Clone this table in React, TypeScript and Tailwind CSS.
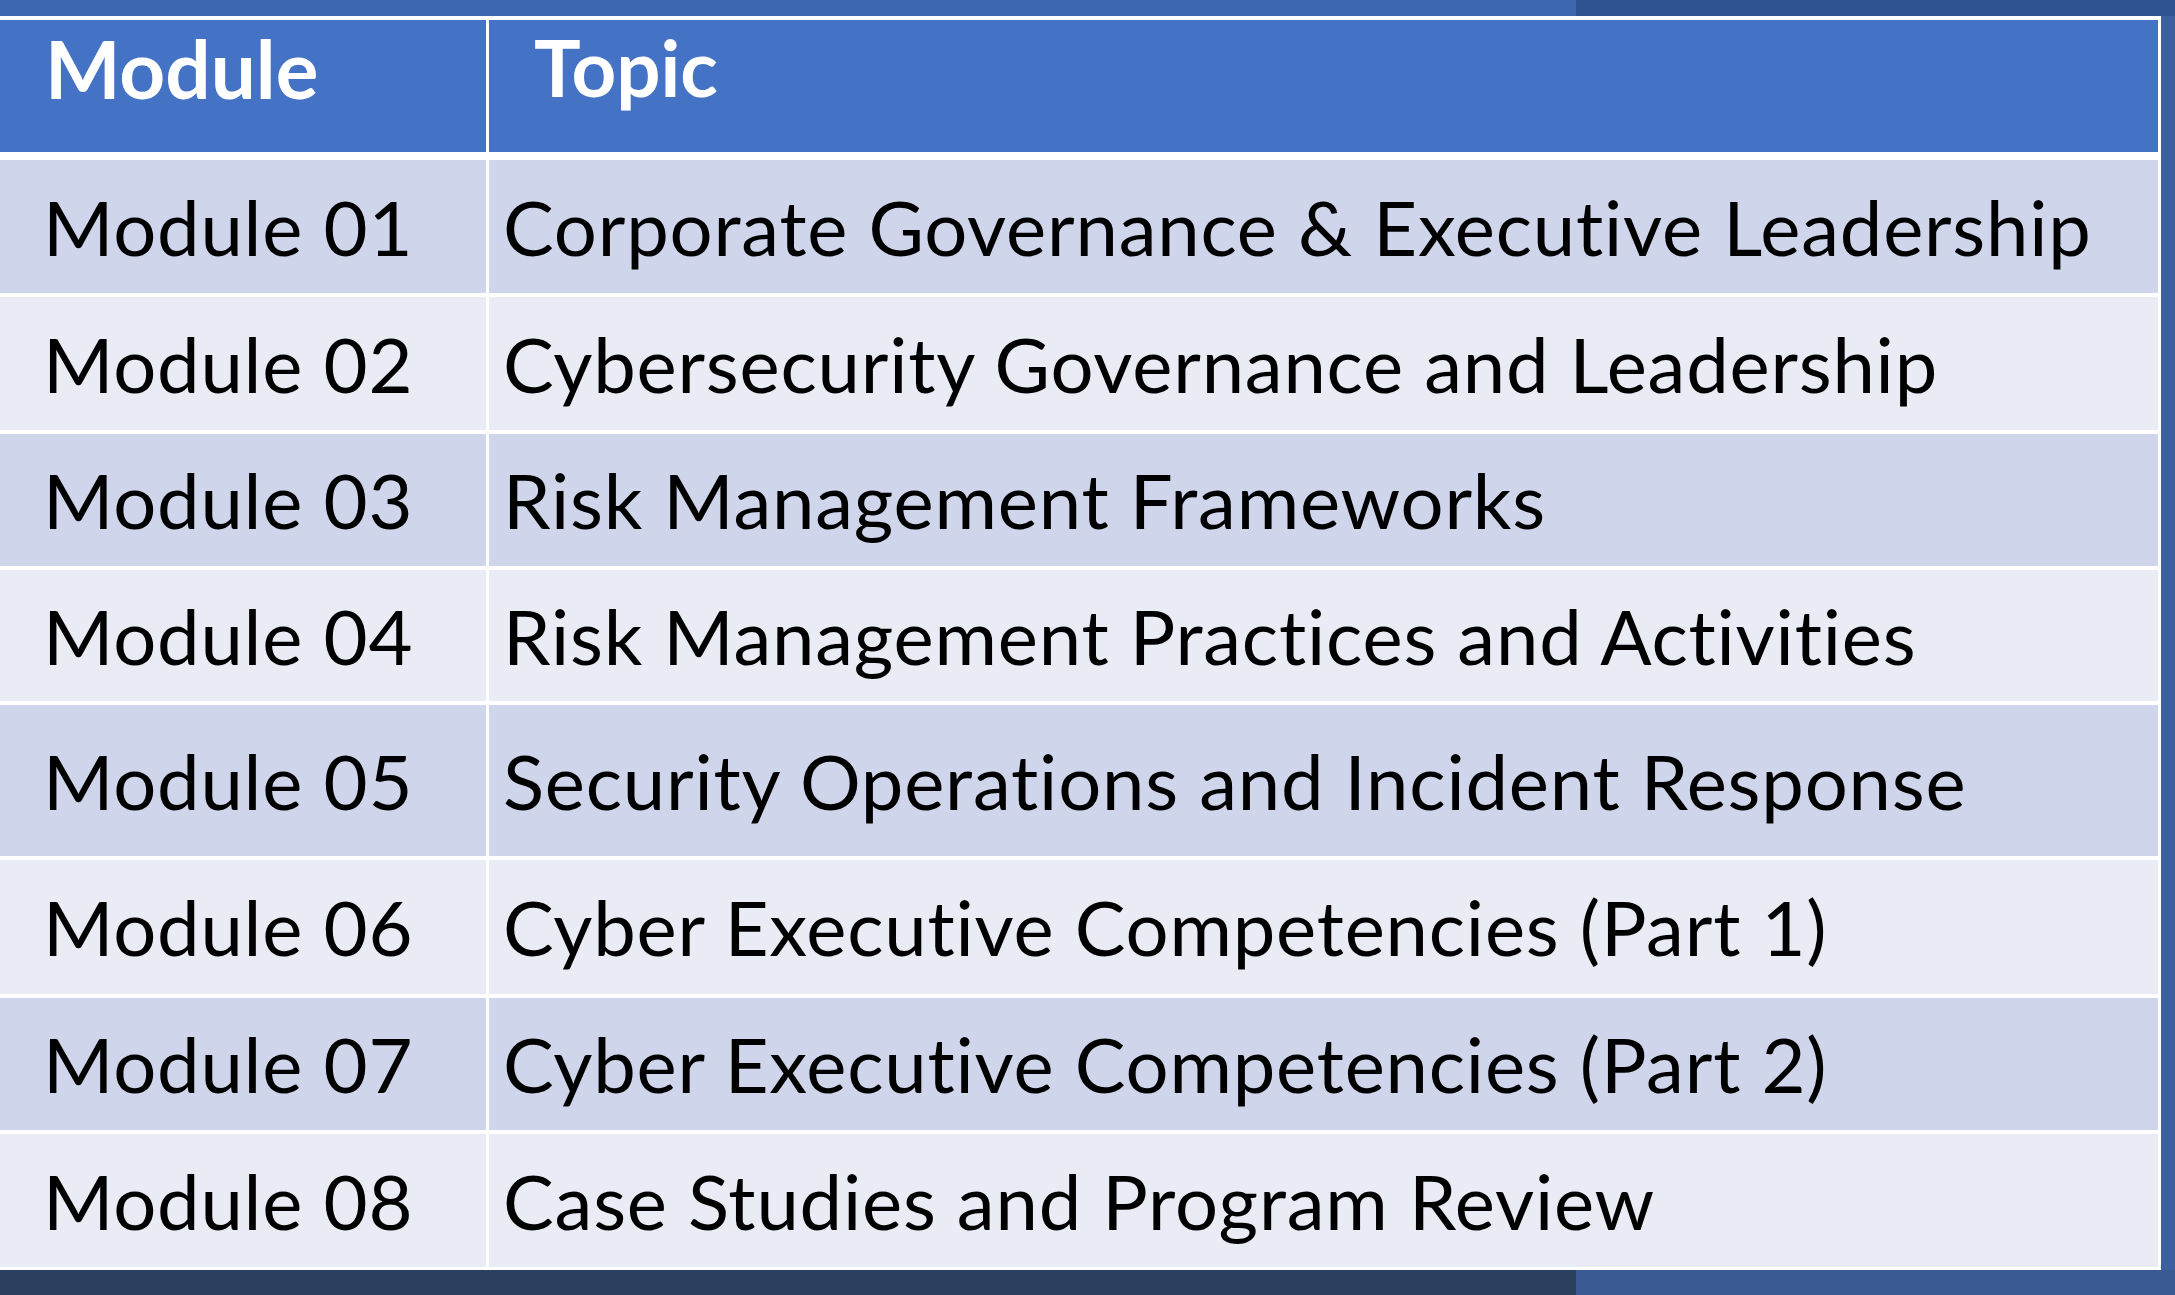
import React from "react";

const rows: { m: string; t: string; h: string; bg: string }[] = [
  { m: "Module 01", t: "Corporate Governance & Executive Leadership", h: "h-[133px]", bg: "bg-[#cfd5ea]" },
  { m: "Module 02", t: "Cybersecurity Governance and Leadership", h: "h-[133px]", bg: "bg-[#e9ebf5]" },
  { m: "Module 03", t: "Risk Management Frameworks", h: "h-[132px]", bg: "bg-[#cfd5ea]" },
  { m: "Module 04", t: "Risk Management Practices and Activities", h: "h-[131px]", bg: "bg-[#e9ebf5]" },
  { m: "Module 05", t: "Security Operations and Incident Response", h: "h-[151px]", bg: "bg-[#cfd5ea]" },
  { m: "Module 06", t: "Cyber Executive Competencies (Part 1)", h: "h-[134px]", bg: "bg-[#e9ebf5]" },
  { m: "Module 07", t: "Cyber Executive Competencies (Part 2)", h: "h-[132px]", bg: "bg-[#cfd5ea]" },
  { m: "Module 08", t: "Case Studies and Program Review", h: "h-[133px]", bg: "bg-[#e9ebf5]" },
];

export default function App() {
  return (
    <div
      className="w-[2175px] h-[1295px] flex flex-col overflow-hidden bg-[#3e5f9d] [font-variant-ligatures:none]"
      style={{ fontFamily: "Lato, 'Noto Sans', sans-serif" }}
    >
      <div className="flex h-[16px] shrink-0">
        <div className="w-[1576px] bg-[#3d68b1]" />
        <div className="flex-1 bg-[#2f5290]" />
      </div>
      <div className="flex flex-1">
        <div className="w-[2161px] bg-white pt-[4px] pr-[3px] pb-[3px] flex flex-col">
          <div className="grid grid-cols-[486px_1fr] gap-x-[3px] h-[132px]">
            <div className="bg-[#4472c4] pl-[45px] pt-[8px] text-white font-bold text-[80px] leading-none">
              Module
            </div>
            <div className="bg-[#4472c4] pl-[45px] pt-[8px] text-white font-bold text-[78px] leading-none">
              Topic
            </div>
          </div>
          <div className="flex flex-col gap-y-[4px] mt-[8px]">
            {rows.map((r) => (
              <div key={r.m} className={`grid grid-cols-[486px_1fr] gap-x-[3px] ${r.h}`}>
                <div className={`${r.bg} flex items-center pl-[43px] text-black text-[76px] tracking-[0.8px] leading-none whitespace-nowrap`}>
                  {r.m}
                </div>
                <div className={`${r.bg} flex items-center pl-[14px] text-black text-[76px] tracking-[0.8px] leading-none whitespace-nowrap`}>
                  {r.t}
                </div>
              </div>
            ))}
          </div>
        </div>
        <div className="flex-1 bg-[#3e5f9d]" />
      </div>
      <div className="flex h-[25px] shrink-0">
        <div className="w-[1576px] bg-[#2b3f5f]" />
        <div className="flex-1 bg-[#3a5a94]" />
      </div>
    </div>
  );
}
